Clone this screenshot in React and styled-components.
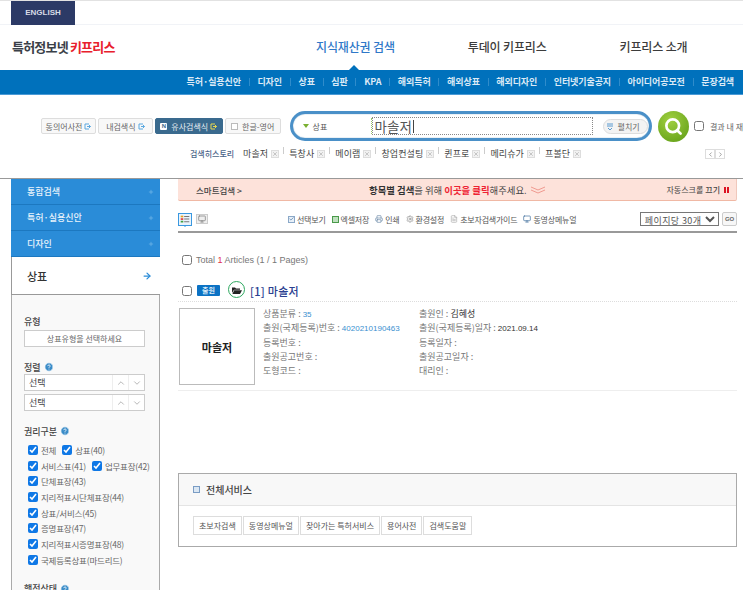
import styled, { createGlobalStyle } from 'styled-components'
import { ArrowRight, Check, ChevronUp, ChevronDown, ChevronLeft, ChevronRight, Search, Printer, Settings, FileText, Monitor, Plus, X, CircleHelp } from 'lucide-react'

const GlobalStyle = createGlobalStyle`
  html, body { margin: 0; padding: 0; background: #fff; }
  body { font-family: "Noto Sans CJK KR", "Liberation Sans", sans-serif; color: #555; }
  * { box-sizing: border-box; }
  input[type=checkbox] { margin: 0; flex: none; accent-color: #0f78e6; }
`

const mainNav = ['지식재산권 검색', '투데이 키프리스', '키프리스 소개']
const subNav = ['특허·실용신안', '디자인', '상표', '심판', 'KPA', '해외특허', '해외상표', '해외디자인', '인터넷기술공지', '아이디어공모전', '문장검색']
const history = ['마솔저', '특창사', '메이램', '창업컨설팅', '퀸프로', '메리슈가', '프볼단']
const sideMenu = ['통합검색', '특허·실용신안', '디자인']
const rights = [
  [['전체'], ['상표(40)']],
  [['서비스표(41)'], ['업무표장(42)']],
  [['단체표장(43)']],
  [['지리적표시단체표장(44)']],
  [['상표/서비스(45)']],
  [['증명표장(47)']],
  [['지리적표시증명표장(48)']],
  [['국제등록상표(마드리드)']],
]
const services = ['초보자검색', '동영상메뉴얼', '찾아가는 특허서비스', '용어사전', '검색도움말']

function App() {
  return (
    <Page>
      <GlobalStyle />
      <TopBar><EnglishTab>ENGLISH</EnglishTab></TopBar>
      <LogoRow>
        <Logo>특허정보넷 <em>키프리스</em></Logo>
        <MainNav>
          {mainNav.map((item, i) => <MainNavItem key={item} $active={i === 0}>{item}</MainNavItem>)}
        </MainNav>
      </LogoRow>
      <SubNav>
        {subNav.map((item) => <SubNavItem key={item}>{item}</SubNavItem>)}
      </SubNav>

      <SearchRow>
        <SearchButton $width={55}>동의어사전 <LinkMark /></SearchButton>
        <SearchButton $width={55}>내검색식 <LinkMark /></SearchButton>
        <SearchButton $width={68} $dark><NBadge>N</NBadge>유사검색식 <LinkMark $yellow /></SearchButton>
        <SearchButton $width={56}><EmptyBox />한글-영어</SearchButton>
        <SearchBox>
          <FieldSelect><GreenArrow />상표</FieldSelect>
          <QueryInput>마솔저<Cursor /></QueryInput>
          <ExpandButton>
            <svg width="6" height="7" viewBox="0 0 6 7" fill="none" stroke="#5a9ad0" strokeWidth="1">
              <path d="M0 1h6M0 3h6M1 5l2 2 2-2" />
            </svg>
            펼치기
          </ExpandButton>
        </SearchBox>
        <GoCircle><Search size={19} strokeWidth={3.4} color="#fff" /></GoCircle>
        <WithinResult><input type="checkbox" />결과 내 재</WithinResult>
      </SearchRow>

      <HistoryRow>
        <HistoryLabel>검색히스토리</HistoryLabel>
        {history.map((item) => (
          <HistoryItem key={item}>{item}<CloseBox><X size={6} /></CloseBox></HistoryItem>
        ))}
        <Pager>
          <PagerButton><ChevronLeft size={7} /></PagerButton>
          <PagerButton><ChevronRight size={7} /></PagerButton>
        </Pager>
      </HistoryRow>

      <Body>
        <Sidebar>
          {sideMenu.map((item) => (
            <SideItem key={item}>{item}<Plus size={6} color="#8cc4ee" /></SideItem>
          ))}
          <SideActive>상표<ArrowRight size={10} strokeWidth={3} color="#2a8cd8" /></SideActive>
          <FilterPanel>
            <FilterLabel>유형</FilterLabel>
            <TypeButton>상표유형을 선택하세요</TypeButton>
            <FilterLabel $top={13}>정렬 <HelpIcon /></FilterLabel>
            <SortSelect>선택<SortArrows><ChevronUp size={10} /></SortArrows><SortArrows><ChevronDown size={10} /></SortArrows></SortSelect>
            <SortSelect $top={3}>선택<SortArrows><ChevronUp size={10} /></SortArrows><SortArrows><ChevronDown size={10} /></SortArrows></SortSelect>
            <FilterLabel $top={13}>권리구분 <HelpIcon /></FilterLabel>
            <CheckList>
              {rights.map((row) => (
                <CheckRow key={row[0][0]}>
                  {row.map(([label]) => (
                    <CheckItem key={label}><input type="checkbox" defaultChecked />{label}</CheckItem>
                  ))}
                </CheckRow>
              ))}
            </CheckList>
            <FilterLabel $top={14}>행정상태 <HelpIcon /></FilterLabel>
          </FilterPanel>
        </Sidebar>

        <Content>
          <Banner>
            <SmartLabel>스마트검색 &gt;</SmartLabel>
            <BannerText>
              <b>항목별 검색</b>을 위해 <strong>이곳을 클릭</strong>해주세요.
              <svg width="16" height="8" viewBox="0 0 16 8" fill="none" stroke="#f09a90" strokeWidth="1">
                <path d="M1 1l7 3 7-3M1 4l7 3 7-3" />
              </svg>
            </BannerText>
            <AutoScroll>자동스크롤 <b>끄기</b><PauseMark /></AutoScroll>
          </Banner>

          <Toolbar>
            <ViewIcon $active>
              <svg width="14" height="13" viewBox="0 0 14 13">
                <rect x="2" y="2" width="3" height="2" fill="#e8a020" />
                <rect x="2" y="5" width="3" height="2" fill="#e04040" />
                <rect x="2" y="8" width="3" height="2" fill="#40a040" />
                <path d="M6 3h6M6 6h6M6 9h6" stroke="#777" strokeWidth="1.2" />
              </svg>
            </ViewIcon>
            <ViewIcon><Monitor size={8} color="#777" /></ViewIcon>
            <ToolLinks>
              <ToolLink><MiniBox $border="#8aa8c8" $fill="#e8f0f8"><Check size={6} color="#3a6a9a" strokeWidth={3} /></MiniBox>선택보기</ToolLink>
              <ToolLink><MiniBox $border="#4a9a4a" $fill="#bfe0bf" />엑셀저장</ToolLink>
              <ToolLink><Printer size={8} color="#6a88a8" />인쇄</ToolLink>
              <ToolLink><Settings size={8} color="#888" />환경설정</ToolLink>
              <ToolLink><FileText size={8} color="#aaa" />초보자검색가이드</ToolLink>
              <ToolLink><Monitor size={8} color="#3a6a9a" />동영상메뉴얼</ToolLink>
            </ToolLinks>
            <PerPage defaultValue="30">
              <option value="30">페이지당 30개</option>
            </PerPage>
            <GoButton>GO</GoButton>
          </Toolbar>

          <TotalRow>
            <input type="checkbox" />
            <span>Total <RedNum>1</RedNum> Articles (1 / 1 Pages)</span>
          </TotalRow>

          <ResultTitle>
            <input type="checkbox" />
            <StatusBadge>출원</StatusBadge>
            <FolderRing>
              <svg width="11" height="8" viewBox="0 0 11 8">
                <path d="M1 7V1.5h3l1 1h4v1.2H3L1 7zM3.2 4.2H11L9 8H1.4z" fill="#222" />
              </svg>
            </FolderRing>
            <TitleText>[1] 마솔저</TitleText>
          </ResultTitle>

          <ResultBody>
            <Thumb>마솔저</Thumb>
            <DetailColumn $width={156}>
              <DetailLine>상품분류 : <LinkValue>35</LinkValue></DetailLine>
              <DetailLine>출원(국제등록)번호 : <LinkValue>4020210190463</LinkValue></DetailLine>
              <DetailLine>등록번호 :</DetailLine>
              <DetailLine>출원공고번호 :</DetailLine>
              <DetailLine>도형코드 :</DetailLine>
            </DetailColumn>
            <DetailColumn>
              <DetailLine>출원인 : <DarkName>김혜성</DarkName></DetailLine>
              <DetailLine>출원(국제등록)일자 : <DarkValue>2021.09.14</DarkValue></DetailLine>
              <DetailLine>등록일자 :</DetailLine>
              <DetailLine>출원공고일자 :</DetailLine>
              <DetailLine>대리인 :</DetailLine>
            </DetailColumn>
          </ResultBody>

          <ServiceBox>
            <ServiceHead><ServiceIcon />전체서비스</ServiceHead>
            <ServiceButtons>
              {services.map((item) => <ServiceButton key={item}>{item}</ServiceButton>)}
            </ServiceButtons>
          </ServiceBox>
        </Content>
      </Body>
    </Page>
  )
}

export default App

const LinkMark = ({ $yellow }) => (
  <svg width="7" height="7" viewBox="0 0 7 7" fill="none" stroke={$yellow ? '#e8d850' : '#5aa8e0'} strokeWidth="1">
    <path d="M5 1H1v5h4M3 3.5h3.5M5 2l1.5 1.5L5 5" />
  </svg>
)

const HelpIcon = () => <CircleHelp size={10} color="#fff" fill="#3a8cc8" strokeWidth={2} />

const Page = styled.div`
  position: relative;
  width: 743px;
  height: 590px;
  overflow: hidden;
  background: #fff;
`

const TopBar = styled.div`
  height: 25px;
  padding-left: 11px;
  border-top: 1px solid #e2e2e2;
  border-bottom: 1px solid #f1f3f7;
`

const EnglishTab = styled.div`
  width: 64px;
  height: 24px;
  background: #2c3a66;
  color: #d8dce6;
  font: bold 8px/24px "Liberation Sans", sans-serif;
  text-align: center;
`

const LogoRow = styled.div`
  height: 45px;
  display: flex;
  align-items: center;
  padding-left: 12px;
`

const Logo = styled.div`
  width: 304px;
  padding-bottom: 3px;
  font-size: 13px;
  font-weight: 700;
  letter-spacing: -0.8px;
  color: #3a4048;
  em { font-style: normal; color: #e8202c; }
`

const MainNav = styled.div`
  display: flex;
  gap: 73px;
  height: 100%;
`

const MainNavItem = styled.div`
  position: relative;
  font-size: 12px;
  font-weight: 500;
  line-height: 44px;
  letter-spacing: -0.15px;
  color: ${(p) => (p.$active ? '#2f78c8' : '#3c3c3c')};
  ${(p) => p.$active && `
    &::after {
      content: '';
      position: absolute;
      left: 33px;
      bottom: 0;
      border: 5px solid transparent;
      border-top: 0;
      border-bottom-color: #0071bc;
    }
  `}
`

const SubNav = styled.div`
  height: 25px;
  background: #0071bc;
  border-bottom: 1px solid #4a9ad6;
  display: flex;
  justify-content: flex-end;
  align-items: center;
  padding-right: 9px;
`

const SubNavItem = styled.div`
  font-size: 9px;
  font-weight: 700;
  letter-spacing: -0.1px;
  color: #dceaf6;
  padding: 0 7.75px;
  line-height: 8px;
  border-left: 1px solid #2f8ccb;
  &:first-child { border-left: 0; }
  &:last-child { padding-right: 0; }
`

const SearchRow = styled.div`
  height: 47px;
  padding: 16px 0 0 41px;
  display: flex;
  align-items: flex-start;
`

const SearchButton = styled.div`
  width: ${(p) => p.$width}px;
  height: 16px;
  margin: 7px 2px 0 0;
  display: flex;
  align-items: center;
  justify-content: center;
  gap: 2px;
  font-size: 8px;
  white-space: nowrap;
  background: ${(p) => (p.$dark ? '#3a6a8e' : '#f8f8f8')};
  color: ${(p) => (p.$dark ? '#e8eef4' : '#666')};
  border: 1px solid ${(p) => (p.$dark ? '#3a6a8e' : '#ddd')};
  border-radius: 2px;
`

const NBadge = styled.span`
  width: 7px;
  height: 7px;
  background: #fff;
  color: #3a6a8e;
  font: bold 6px/7px "Liberation Sans", sans-serif;
  text-align: center;
  border-radius: 1px;
  margin-right: 2px;
`

const EmptyBox = styled.span`
  width: 7px;
  height: 7px;
  border: 1px solid #bbb;
  background: #fff;
  margin-right: 2px;
`

const SearchBox = styled.div`
  width: 363px;
  height: 30px;
  margin-left: 7px;
  border: 3px solid #4a90c8;
  border-radius: 15px;
  background: #fff;
  display: flex;
  align-items: center;
  padding-left: 10px;
  box-shadow: inset 0 0 1px #2f6f9f;
`

const FieldSelect = styled.div`
  width: 69px;
  display: flex;
  align-items: center;
  gap: 4px;
  font-size: 8px;
  color: #555;
  border-right: 1px dotted #9c6;
  height: 16px;
`

const GreenArrow = styled.span`
  border: 3px solid transparent;
  border-top: 4px solid #7ab030;
  border-bottom: 0;
`

const QueryInput = styled.div`
  width: 221px;
  height: 18px;
  border: 1px dotted #888;
  font-size: 13.5px;
  line-height: 16px;
  color: #555;
  padding-left: 2px;
  display: flex;
  align-items: center;
`

const Cursor = styled.span`
  width: 1px;
  height: 13px;
  margin-left: 1px;
  background: #444;
`

const ExpandButton = styled.div`
  width: 45px;
  height: 15px;
  margin-left: 10px;
  border: 1px solid #ddd;
  border-radius: 8px;
  background: #f3f3f3;
  font-size: 8px;
  color: #666;
  display: flex;
  align-items: center;
  justify-content: flex-end;
  gap: 5px;
  padding-right: 7px;
`

const GoCircle = styled.div`
  width: 31px;
  height: 31px;
  margin-left: 6px;
  border-radius: 50%;
  background: radial-gradient(circle at 40% 30%, #a0d040, #5c9a14);
  display: flex;
  align-items: center;
  justify-content: center;
`

const WithinResult = styled.label`
  display: flex;
  align-items: center;
  gap: 6px;
  margin: 7px 0 0 5px;
  height: 16px;
  font-size: 8px;
  color: #666;
  white-space: nowrap;
  input { width: 10px; height: 10px; }
`

const HistoryRow = styled.div`
  height: 36px;
  padding: 5px 18px 0 190px;
  display: flex;
  align-items: flex-start;
  font-size: 9px;
  line-height: 14px;
`

const HistoryLabel = styled.span`
  width: 53px;
  font-size: 8px;
  font-weight: 500;
  color: #4a6488;
`

const HistoryItem = styled.span`
  position: relative;
  display: flex;
  align-items: center;
  gap: 3px;
  padding-right: 5px;
  margin-right: 5px;
  color: #444;
  letter-spacing: 0.1px;
  white-space: nowrap;
  &:not(:nth-last-child(2))::after {
    content: '';
    position: absolute;
    right: 0;
    top: 0;
    width: 1px;
    height: 7px;
    background: #ccc;
  }
`

const CloseBox = styled.span`
  width: 8px;
  height: 8px;
  border: 1px solid #ddd;
  background: #f2f2f2;
  color: #999;
  display: flex;
  align-items: center;
  justify-content: center;
`

const Pager = styled.span`
  display: flex;
  margin-left: auto;
  margin-top: 2px;
`

const PagerButton = styled.span`
  width: 10px;
  height: 10px;
  border: 1px solid #ddd;
  display: flex;
  align-items: center;
  justify-content: center;
  color: #666;
`

const Body = styled.div`
  display: flex;
  border-top: 1px solid #999;
  height: 412px;
  padding-left: 11px;
`

const Sidebar = styled.div`
  width: 149px;
  flex: none;
`

const SideItem = styled.div`
  height: 26px;
  background: #2a8cd8;
  border-bottom: 1px solid #1c78c0;
  color: #e8f3fb;
  font-size: 9px;
  font-weight: 500;
  padding: 0 6px 0 16px;
  display: flex;
  align-items: center;
  justify-content: space-between;
`

const SideActive = styled.div`
  height: 38px;
  background: #fff;
  border: 1px solid #999;
  border-width: 0 0 1px 1px;
  color: #333;
  font-size: 11px;
  font-weight: 500;
  padding: 0 8px 0 15px;
  display: flex;
  align-items: center;
  justify-content: space-between;
`

const FilterPanel = styled.div`
  height: 296px;
  background: #f9f9f9;
  border: 1px solid #aaa;
  border-width: 0 1px 0 1px;
  padding: 19px 0 0 12px;
`

const FilterLabel = styled.div`
  display: flex;
  align-items: center;
  gap: 3px;
  margin-top: ${(p) => p.$top || 0}px;
  height: 14px;
  font-size: 9px;
  font-weight: 500;
  color: #444;
`

const TypeButton = styled.div`
  width: 121px;
  height: 17px;
  border: 1px solid #ccc;
  background: #fff;
  font-size: 8px;
  line-height: 15px;
  text-align: center;
  color: #666;
  margin-top: 2px;
`

const SortSelect = styled.div`
  width: 121px;
  height: 17px;
  margin-top: ${(p) => p.$top || 0}px;
  border: 1px solid #ccc;
  background: #fff;
  display: flex;
  align-items: center;
  font-size: 9px;
  color: #444;
  padding-left: 4px;
  & > span:first-of-type { margin-left: auto; }
`

const SortArrows = styled.span`
  width: 16px;
  height: 100%;
  border-left: 1px solid #eee;
  color: #aaa;
  display: flex;
  align-items: center;
  justify-content: center;
`

const CheckList = styled.div`
  margin-top: 4px;
  padding-left: 4px;
  display: flex;
  flex-direction: column;
`

const CheckRow = styled.div`
  height: 15.7px;
  display: flex;
  gap: 6px;
`

const CheckItem = styled.label`
  display: flex;
  align-items: center;
  gap: 3px;
  font-size: 8.5px;
  letter-spacing: -0.2px;
  color: #666;
  white-space: nowrap;
  input { width: 10px; height: 10px; }
`

const Content = styled.div`
  width: 559px;
  margin-left: 18px;
  flex: none;
`

const Banner = styled.div`
  height: 22px;
  background: #fde2da;
  border-bottom: 1px solid #f0b8a4;
  border-right: 1px solid #f0c8bc;
  border-radius: 0 0 2px 2px;
  display: flex;
  align-items: center;
  font-size: 8px;
  color: #444;
  padding: 0 7px 0 18px;
`

const SmartLabel = styled.span`
  width: 173px;
  font-size: 8.5px;
  font-weight: 500;
`

const BannerText = styled.span`
  display: flex;
  align-items: center;
  white-space: pre-wrap;
  font-size: 9.4px;
  b { font-weight: 700; color: #333; }
  strong { font-weight: 700; color: #ee2233; }
  svg { margin-left: 3px; }
`

const AutoScroll = styled.span`
  margin-left: auto;
  display: flex;
  align-items: center;
  gap: 3px;
  b { font-weight: 500; margin-left: -1px; }
`

const PauseMark = styled.span`
  width: 5px;
  height: 6px;
  border: solid #dd1122;
  border-width: 0 2px;
  margin-left: 1px;
`

const Toolbar = styled.div`
  height: 32px;
  padding-top: 6px;
  border-bottom: 2px solid #999;
  display: flex;
  align-items: center;
`

const ViewIcon = styled.span`
  position: relative;
  width: ${(p) => (p.$active ? '14px' : '12px')};
  height: ${(p) => (p.$active ? '13px' : '10px')};
  margin-right: 4px;
  display: flex;
  align-items: center;
  justify-content: center;
  border: 1px solid ${(p) => (p.$active ? '#3a98e0' : '#ccc')};
  background: ${(p) => (p.$active ? '#eaf4fc' : '#eee')};
  ${(p) => p.$active && `
    &::after {
      content: '';
      position: absolute;
      left: 4px;
      top: 11px;
      border: 2px solid transparent;
      border-top-color: #3a98e0;
    }
  `}
`

const ToolLinks = styled.div`
  margin-left: 76px;
  width: 355px;
  display: flex;
  gap: 6px;
`

const ToolLink = styled.span`
  display: flex;
  align-items: center;
  gap: 2px;
  font-size: 8px;
  letter-spacing: -0.2px;
  color: #555;
  white-space: nowrap;
`

const MiniBox = styled.span`
  width: 7px;
  height: 7px;
  border: 1px solid ${(p) => p.$border};
  background: ${(p) => p.$fill};
  display: flex;
  align-items: center;
  justify-content: center;
`

const PerPage = styled.select`
  width: 80px;
  height: 14px;
  padding: 0;
  border: 1px solid #777;
  background: #fff;
  font: 9px "Noto Sans CJK KR", sans-serif;
  letter-spacing: 0.4px;
  color: #555;
`

const GoButton = styled.span`
  width: 15px;
  height: 14px;
  margin-left: 3px;
  border: 1px solid #ccc;
  border-radius: 2px;
  background: #f7f7f7;
  color: #666;
  font: bold 6px/12px "Liberation Sans", sans-serif;
  text-align: center;
`

const TotalRow = styled.div`
  height: 14px;
  margin-top: 20px;
  padding-left: 4px;
  display: flex;
  align-items: center;
  gap: 4px;
  font: 9px "Liberation Sans", sans-serif;
  color: #777;
  input { width: 10px; height: 10px; }
`

const RedNum = styled.span`
  color: #e03050;
`

const ResultTitle = styled.div`
  height: 18px;
  margin-top: 17px;
  padding: 0 0 4px 4px;
  border-bottom: 1px dotted #ddd;
  display: flex;
  align-items: center;
  input { width: 10px; height: 10px; }
`

const StatusBadge = styled.span`
  width: 23px;
  height: 11px;
  margin-left: 5px;
  background: #0b72c4;
  border-radius: 1px;
  color: #dcecf8;
  font-size: 7px;
  font-weight: 700;
  line-height: 11px;
  text-align: center;
`

const FolderRing = styled.span`
  width: 17px;
  height: 17px;
  flex: none;
  margin: -2px 5px 0 8px;
  border: 1.5px solid #2ea860;
  border-radius: 50%;
  display: flex;
  align-items: center;
  justify-content: center;
`

const TitleText = styled.span`
  font-size: 11px;
  font-weight: 500;
  letter-spacing: 0.3px;
  color: #2a4090;
`

const ResultBody = styled.div`
  height: 89px;
  padding: 6px 0 0 1px;
  border-bottom: 1px solid #eee;
  display: flex;
`

const Thumb = styled.div`
  width: 76px;
  height: 77px;
  border: 1px solid #bbb;
  display: flex;
  align-items: center;
  justify-content: center;
  font-size: 11px;
  font-weight: 700;
  color: #222;
  margin-right: 8px;
`

const DetailColumn = styled.div`
  width: ${(p) => (p.$width ? `${p.$width}px` : 'auto')};
  margin-top: -1px;
`

const DetailLine = styled.div`
  height: 14.25px;
  font-size: 9px;
  line-height: 14.25px;
  color: #777;
  white-space: nowrap;
`

const LinkValue = styled.span`
  color: #3a90d0;
  font: 8px "Liberation Sans", sans-serif;
`

const DarkName = styled.span`
  color: #333;
`

const DarkValue = styled.span`
  color: #333;
  font: 8px "Liberation Sans", sans-serif;
`

const ServiceBox = styled.div`
  height: 74px;
  margin-top: 82px;
  border: 1px solid #aaa;
`

const ServiceHead = styled.div`
  height: 32px;
  background: #f8f8f8;
  border-bottom: 1px solid #e4e4e4;
  padding-left: 14px;
  display: flex;
  align-items: center;
  gap: 6px;
  font-size: 10px;
  font-weight: 500;
  color: #444;
`

const ServiceIcon = styled.span`
  width: 7px;
  height: 7px;
  border: 1px solid #7a9cc4;
  background: #dbe7f3;
`

const ServiceButtons = styled.div`
  display: flex;
  gap: 1px;
  padding: 10px 0 0 14px;
`

const ServiceButton = styled.div`
  height: 19px;
  padding: 0 5px;
  border: 1px solid #ddd;
  font-size: 8px;
  line-height: 17px;
  color: #555;
  white-space: nowrap;
`
